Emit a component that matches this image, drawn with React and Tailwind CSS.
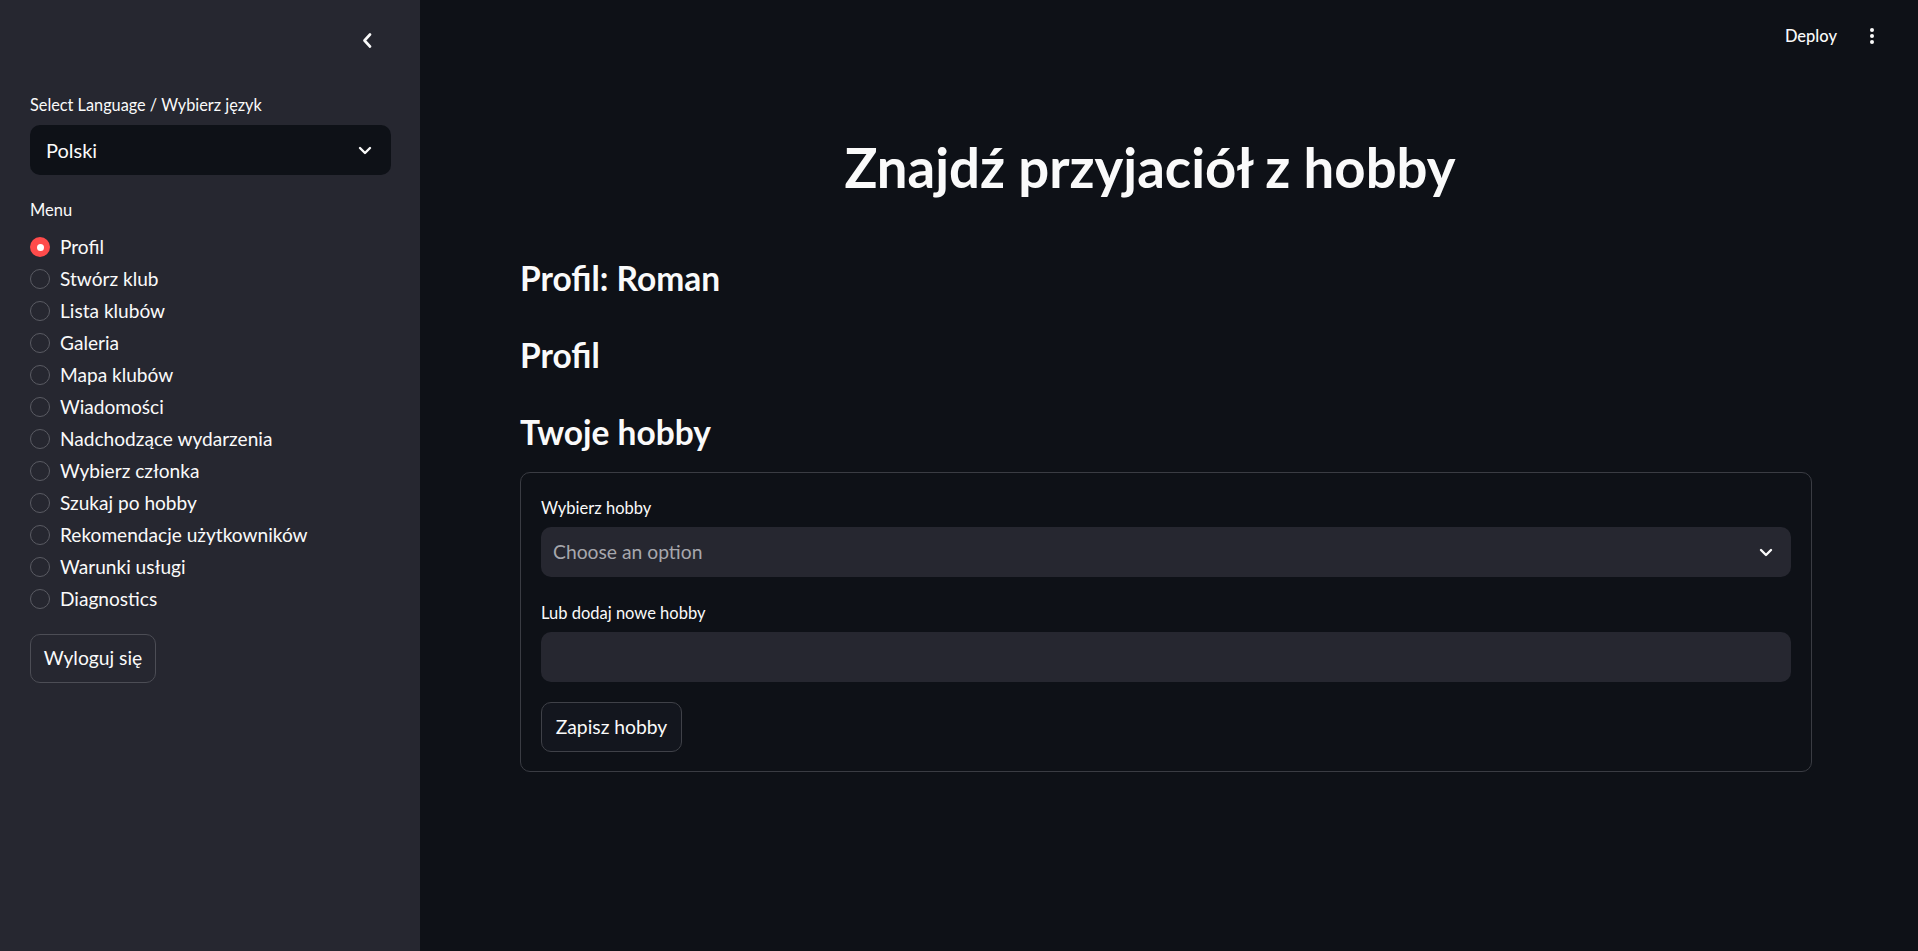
import React from "react";

const font = { fontFamily: "Lato, 'Noto Sans', sans-serif" };

function Chevron({ className }) {
  return (
    <svg className={className} width="14" height="9" viewBox="0 0 14 9" fill="none">
      <path d="M2 2l5 5 5-5" stroke="#fafafa" strokeWidth="2.4" strokeLinecap="round" strokeLinejoin="round" />
    </svg>
  );
}

const items = [
  "Profil",
  "Stwórz klub",
  "Lista klubów",
  "Galeria",
  "Mapa klubów",
  "Wiadomości",
  "Nadchodzące wydarzenia",
  "Wybierz członka",
  "Szukaj po hobby",
  "Rekomendacje użytkowników",
  "Warunki usługi",
  "Diagnostics",
];

export default function App() {
  return (
    <div className="flex w-full h-[951px] overflow-hidden bg-[#0e1117] text-[#fafafa]" style={font}>
      <aside className="w-[420px] shrink-0 h-full bg-[#262730] flex flex-col pl-[30px] pr-[29px]">
        <div className="h-[94px] flex justify-end items-start pt-[33px] pr-[19px]">
          <svg width="10" height="15" viewBox="0 0 10 15" fill="none">
            <path d="M8 1.5L2.5 7.5L8 13.5" stroke="#fafafa" strokeWidth="2.6" strokeLinecap="round" strokeLinejoin="round" />
          </svg>
        </div>
        <div className="h-[23px] flex items-center text-[16.3px]">Select Language / Wybierz język</div>
        <div className="mt-[8px] h-[50px] rounded-[10px] bg-[#0e1117] flex items-center justify-between pl-[16px] pr-[19px] text-[20px]">
          <span>Polski</span>
          <Chevron />
        </div>
        <div className="mt-[24px] h-[22px] flex items-center text-[16.5px]">Menu</div>
        <div className="mt-[10px] flex flex-col">
          {items.map((it, i) => (
            <div key={it} className="h-[32px] flex items-center gap-[10px] text-[19.1px]">
              {i === 0 ? (
                <span className="w-[20px] h-[20px] rounded-full bg-[#ff4b4b] flex items-center justify-center">
                  <span className="w-[7px] h-[7px] rounded-full bg-white" />
                </span>
              ) : (
                <span className="w-[20px] h-[20px] rounded-full border-[1.5px] border-[#5a5b63]" />
              )}
              <span>{it}</span>
            </div>
          ))}
        </div>
        <div className="mt-[19px]">
          <button className="h-[49px] w-[126px] rounded-[10px] border border-[#4c4d55] bg-[#262730] text-[19.3px] text-[#fafafa] flex items-center justify-center">
            Wyloguj się
          </button>
        </div>
      </aside>

      <main className="flex-1 h-full flex flex-col">
        <div className="h-[72px] flex items-center justify-end pr-[44px] gap-[33px]">
          <span className="text-[16.5px] font-medium">Deploy</span>
          <div className="flex flex-col gap-[2px] items-center">
            <span className="w-[4px] h-[4px] rounded-full bg-[#fafafa]" />
            <span className="w-[4px] h-[4px] rounded-full bg-[#fafafa]" />
            <span className="w-[4px] h-[4px] rounded-full bg-[#fafafa]" />
          </div>
        </div>
        <div className="pl-[100px] pr-[106px] flex flex-col">
          <div className="mt-[62px] h-[66px] flex items-center justify-center pr-[32px]">
            <h1 className="text-[54.5px] font-bold leading-[66px]">Znajdź przyjaciół z hobby</h1>
          </div>
          <div className="mt-[56px] h-[44px] flex items-center">
            <h3 className="text-[33.5px] font-bold">Profil: Roman</h3>
          </div>
          <div className="mt-[33px] h-[44px] flex items-center">
            <h3 className="text-[33.5px] font-bold">Profil</h3>
          </div>
          <div className="mt-[33px] h-[44px] flex items-center">
            <h3 className="text-[33.5px] font-bold">Twoje hobby</h3>
          </div>
          <div className="mt-[18px] w-[1292px] h-[300px] rounded-[10px] border border-[#3a3c43] px-[20px] pt-[24px] flex flex-col">
            <div className="h-[22px] flex items-center text-[16.5px]">Wybierz hobby</div>
            <div className="mt-[8px] h-[50px] rounded-[10px] bg-[#262730] flex items-center justify-between pl-[12px] pr-[18px] text-[19.3px]">
              <span className="text-[#a6a7ad]">Choose an option</span>
              <Chevron />
            </div>
            <div className="mt-[25px] h-[22px] flex items-center text-[16.5px]">Lub dodaj nowe hobby</div>
            <div className="mt-[8px] h-[50px] rounded-[10px] bg-[#262730]" />
            <div className="mt-[20px]">
              <button className="h-[50px] w-[141px] rounded-[10px] border border-[#3f4148] bg-[#13161e] text-[19.3px] text-[#fafafa] flex items-center justify-center">
                Zapisz hobby
              </button>
            </div>
          </div>
        </div>
      </main>
    </div>
  );
}
